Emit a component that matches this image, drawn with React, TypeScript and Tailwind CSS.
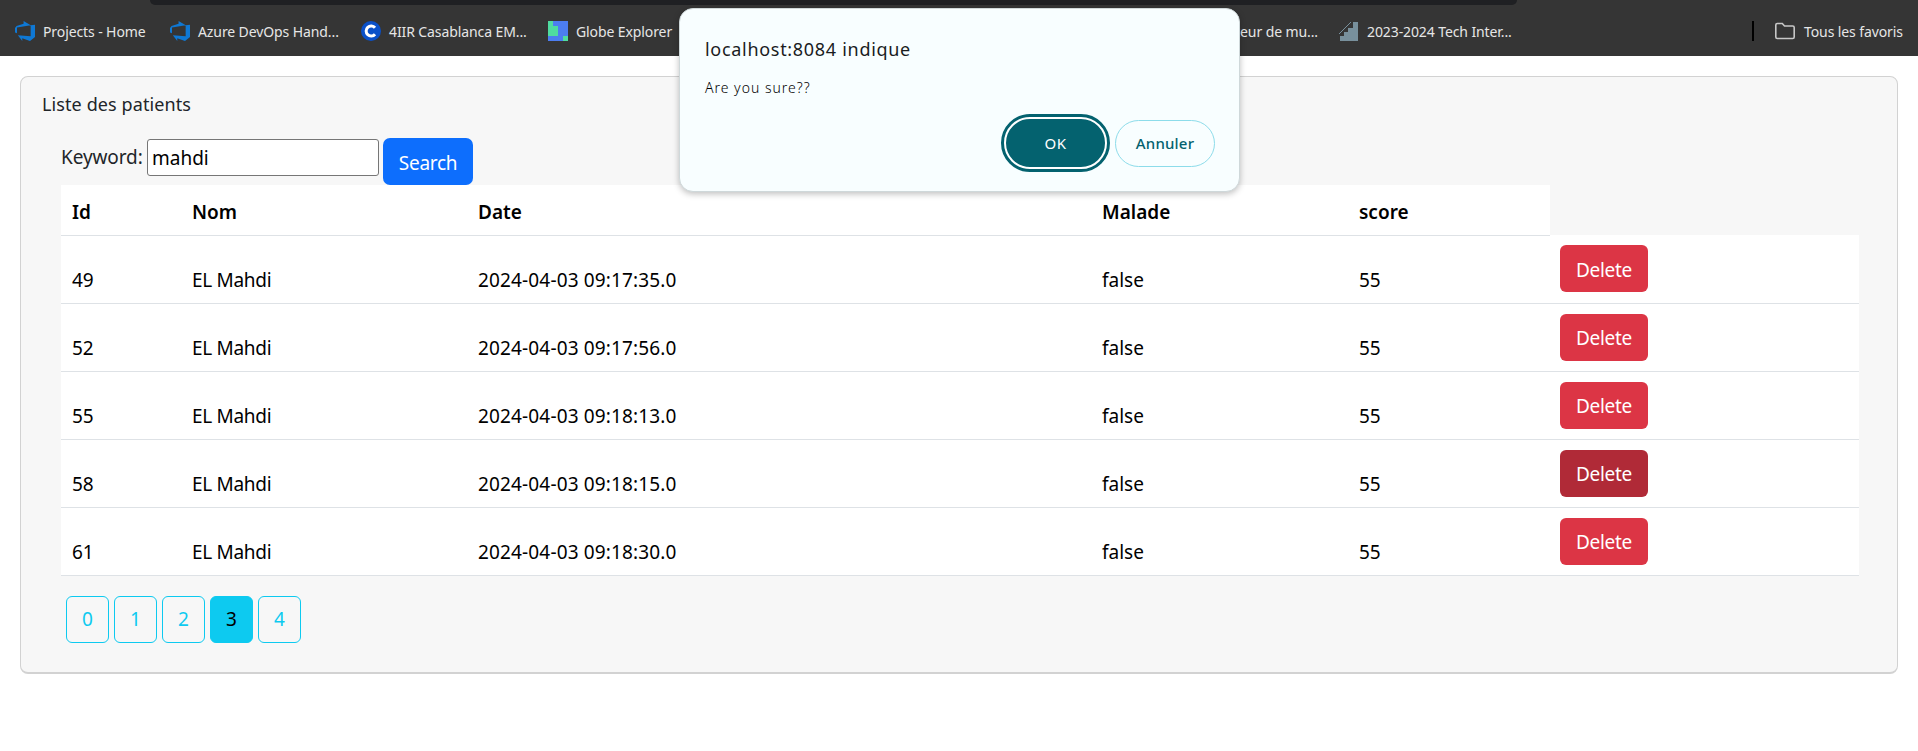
const font = "font-['Noto_Sans',sans-serif]";

const rows = [
  { id: 49, date: '2024-04-03 09:17:35.0' },
  { id: 52, date: '2024-04-03 09:17:56.0' },
  { id: 55, date: '2024-04-03 09:18:13.0' },
  { id: 58, date: '2024-04-03 09:18:15.0', active: true },
  { id: 61, date: '2024-04-03 09:18:30.0' },
];

const DevOpsIcon = () => (
  <svg width="20" height="20" viewBox="1 1 16 16" className="shrink-0">
    <path fill="#0f78d4" d="M17 4v9.740l-4 3.280-6.200-2.260V17l-3.510-4.590 10.230.8V4.440zm-3.410.49L7.850 1v2.290L2.230 4.940 1 6.520v3.590l1.610.71V6.230z" />
  </svg>
);

const CIcon = () => (
  <svg width="20" height="20" viewBox="0 0 20 20" className="shrink-0">
    <circle cx="10" cy="10" r="10" fill="#0a50c8" />
    <path d="M14 6.800a5 5 0 1 0 0 6.400" fill="none" stroke="#fff" strokeWidth="3" />
  </svg>
);

const GridIcon = () => (
  <svg width="20" height="20" viewBox="0 0 20 20" className="shrink-0">
    <rect width="20" height="20" fill="#4c7df0" />
    <path fill="#4fdca0" d="M0 0h5v5h5v10H0zM15 15h5v5h-5z" />
  </svg>
);

const StairsIcon = () => (
  <svg width="20" height="20" viewBox="0 0 20 20" className="shrink-0">
    <path fill="#78909c" d="M19 1v19H1v-5h4v-4h4V7h5V1z" />
    <path stroke="#78909c" strokeWidth="1" d="M0 13 12 1" />
  </svg>
);

const FolderIcon = () => (
  <svg width="22" height="18" viewBox="0 0 22 18" fill="none" className="shrink-0">
    <path stroke="#c7c7c7" strokeWidth="1.600" d="M1.800 15V3a1.500 1.500 0 0 1 1.500-1.500h5L10.500 4h8.200a1.500 1.500 0 0 1 1.500 1.500V15a1.500 1.500 0 0 1-1.500 1.500H3.300A1.500 1.500 0 0 1 1.800 15z" />
  </svg>
);

const Bookmark = ({ icon, label, className }: { icon?: React.ReactNode; label: string; className: string }) => (
  <div className={`flex items-center gap-2 shrink-0 whitespace-nowrap ${className}`}>
    {icon}
    <span className="text-[14px] tracking-[-0.1px] text-[#e6e6e6]">{label}</span>
  </div>
);

export default function App() {
  return (
    <div className={`relative min-h-[751px] bg-white text-[#212529] ${font}`}>
      <div className="relative flex items-center h-14 pt-[6px] pl-[15px] bg-[#353535]">
        <div className="absolute top-0 left-[150px] w-[1367px] h-[5px] rounded-b-xl bg-[#1f2023]" />
        <Bookmark icon={<DevOpsIcon />} label="Projects - Home" className="w-[155px]" />
        <Bookmark icon={<DevOpsIcon />} label="Azure DevOps Hand..." className="w-[191px]" />
        <Bookmark icon={<CIcon />} label="4IIR Casablanca EM..." className="w-[187px]" />
        <Bookmark icon={<GridIcon />} label="Globe Explorer" className="w-[144px]" />
        <Bookmark label="Lecteur de mu..." className="w-[647px] justify-end pr-[21px]" />
        <Bookmark icon={<StairsIcon />} label="2023-2024 Tech Inter..." className="w-[413px]" />
        <div className="w-[2px] h-5 mr-5 bg-black shrink-0" />
        <Bookmark icon={<FolderIcon />} label="Tous les favoris" className="w-[130px]" />
      </div>

      <div className="mx-5 mt-5 h-[598px] rounded-lg border border-[#d2d2d2] border-b-2 bg-[#f7f7f7]">
        <div className="pl-[21px] pt-[14px] text-[18px] leading-[26px] tracking-[0.1px] text-[#212529]">Liste des patients</div>
        <div className="px-10 pt-[21px]">
          <div className="flex items-start h-[47px] text-[19px]">
            <label className="mt-[5px] w-[86px] shrink-0 tracking-[-0.1px]">Keyword:</label>
            <input
              readOnly
              value="mahdi"
              className="w-[232px] h-[37px] mt-[1px] px-[4px] bg-white border border-[#767676] rounded-[3px] text-[19px] text-black outline-none"
            />
            <button className="ml-[4px] w-[90px] h-[47px] pt-[3px] rounded-[7px] bg-[#0d6efd] text-[19px] tracking-[-0.3px] text-white">Search</button>
          </div>
          <table className="w-[1798px] border-collapse table-fixed text-[19px] text-black">
            <thead>
              <tr className="h-[50px] text-left">
                <th className="w-[121px] pl-[11px] pt-[4px] bg-white border-b border-[#dee2e6] font-semibold">Id</th>
                <th className="w-[286px] pl-[10px] pt-[4px] bg-white border-b border-[#dee2e6] font-semibold">Nom</th>
                <th className="w-[624px] pl-[10px] pt-[4px] bg-white border-b border-[#dee2e6] font-semibold">Date</th>
                <th className="w-[256px] pl-[10px] pt-[4px] bg-white border-b border-[#dee2e6] font-semibold">Malade</th>
                <th className="w-[202px] pl-[11px] pt-[4px] bg-white border-b border-[#dee2e6] font-semibold">score</th>
                <th />
              </tr>
            </thead>
            <tbody>
              {rows.map((row) => (
                <tr key={row.id} className="h-[68px] bg-white border-b border-[#dee2e6]">
                  <td className="pl-[11px] pt-[22px]">{row.id}</td>
                  <td className="pl-[10px] pt-[22px] tracking-[-0.3px]">EL Mahdi</td>
                  <td className="pl-[10px] pt-[22px] tracking-[0.15px]">{row.date}</td>
                  <td className="pl-[10px] pt-[22px]">false</td>
                  <td className="pl-[11px] pt-[22px]">55</td>
                  <td className="pl-[10px]">
                    <button className={`block w-[88px] h-[47px] pt-[3px] rounded-md text-[19px] tracking-[-0.3px] text-white ${row.active ? 'bg-[#b02a37]' : 'bg-[#dc3545]'}`}>
                      Delete
                    </button>
                  </td>
                </tr>
              ))}
            </tbody>
          </table>
          <ul className="flex gap-[5px] mt-5 ml-[5px]">
            {[0, 1, 2, 3, 4].map((page) => (
              <li key={page}>
                <button className={`w-[43px] h-[47px] rounded-md border border-[#0dcaf0] text-[19px] ${page === 3 ? 'bg-[#0dcaf0] text-black' : 'text-[#0dcaf0]'}`}>
                  {page}
                </button>
              </li>
            ))}
          </ul>
        </div>
      </div>

      <div className="absolute top-2 left-[679px] w-[561px] h-[184px] rounded-[14px] border border-[#cfd8da] bg-[#f8feff] shadow-[0_2px_6px_rgba(0,0,0,0.25)]">
        <div className="absolute left-[25px] top-[28px] text-[18px] leading-6 tracking-[0.7px] text-[#1a1c1e]">localhost:8084 indique</div>
        <div className="absolute left-[25px] top-[69px] text-[14px] leading-5 tracking-[1px] font-light text-black">Are you sure??</div>
        <div className="absolute right-[24px] top-[105px] flex items-center gap-[5px]">
          <button className="w-[109px] h-[58px] rounded-full border-[3px] border-[#04626f] bg-[#04626f] text-[15px] tracking-[0.5px] text-white relative">
            <span className="absolute inset-0 rounded-full border-2 border-white" />
            OK
          </button>
          <button className="w-[100px] h-[47px] rounded-full border border-[#8ddcea] text-[15px] font-medium tracking-[0.2px] text-[#04626f]">Annuler</button>
        </div>
      </div>
    </div>
  );
}
